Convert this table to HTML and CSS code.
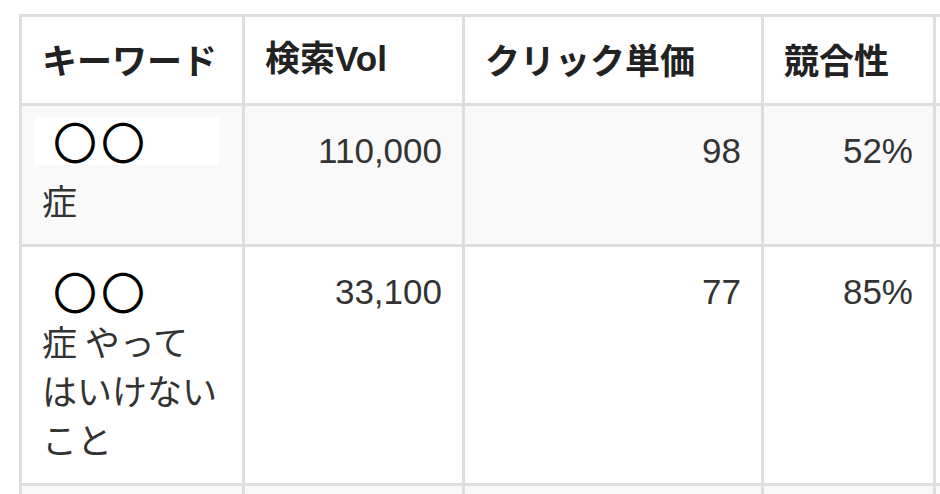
FILE: index.html
```html
<!DOCTYPE html>
<html lang="ja">
<head>
<meta charset="utf-8">
<link rel="stylesheet" href="styles.css">
</head>
<body>
<table class="kw-table">
  <colgroup>
    <col class="c-kw">
    <col class="c-vol">
    <col class="c-cpc">
    <col class="c-comp">
    <col class="c-more">
  </colgroup>
  <thead>
    <tr>
      <th>キーワード</th>
      <th>検索Vol</th>
      <th>クリック単価</th>
      <th>競合性</th>
      <th></th>
    </tr>
  </thead>
  <tbody>
    <tr class="odd">
      <td class="kw"><span class="mask">〇〇</span>症</td>
      <td class="num">110,000</td>
      <td class="num">98</td>
      <td class="num">52%</td>
      <td class="num"></td>
    </tr>
    <tr>
      <td class="kw"><span class="mask plain">〇〇</span>症 やってはいけないこと</td>
      <td class="num">33,100</td>
      <td class="num">77</td>
      <td class="num">85%</td>
      <td class="num"></td>
    </tr>
    <tr class="odd">
      <td class="kw">&nbsp;</td>
      <td class="num"></td>
      <td class="num"></td>
      <td class="num"></td>
      <td class="num"></td>
    </tr>
  </tbody>
</table>
</body>
</html>
```

FILE: styles.css
```css
html, body {
  margin: 0;
  padding: 0;
  overflow: hidden;
  background: #ffffff;
}

body {
  padding: 14px 0 0 19px;
  font-family: "Liberation Sans", "Noto Sans CJK JP", sans-serif;
  color: #333333;
}

.kw-table {
  border-collapse: collapse;
  table-layout: fixed;
  width: 1122px;
  font-size: 35px;
  line-height: 49px;
}

.c-kw { width: 223px; }
.c-vol { width: 220px; }
.c-cpc { width: 299px; }
.c-comp { width: 172px; }
.c-more { width: 208px; }

.kw-table th,
.kw-table td {
  border: 3px solid #dedede;
  padding: 20px;
  vertical-align: top;
}

.kw-table th {
  text-align: left;
  font-weight: bold;
  color: #222222;
  padding-top: 17px;
  padding-bottom: 20px;
  white-space: nowrap;
  font-family: "Noto Sans CJK JP", "Liberation Sans", sans-serif;
}

.kw-table th:nth-child(2) {
  font-family: "Liberation Sans", "Noto Sans CJK JP", sans-serif;
}

.kw-table tr.odd td {
  background: #f9f9f9;
}

.kw {
  font-family: "Noto Sans CJK JP", sans-serif;
}

.num {
  text-align: right;
}

.mask {
  display: block;
  width: 185px;
  height: 48px;
  margin: -9px 0 10px -8px;
  padding-left: 19px;
  box-sizing: border-box;
  background: #ffffff;
  color: #000000;
  font-size: 44px;
  line-height: 48px;
  letter-spacing: 4px;
  font-family: "Noto Sans CJK JP", sans-serif;
}

.mask.plain {
  background: transparent;
  margin: 0 0 0 -8px;
  height: 49px;
  line-height: 49px;
}
```
